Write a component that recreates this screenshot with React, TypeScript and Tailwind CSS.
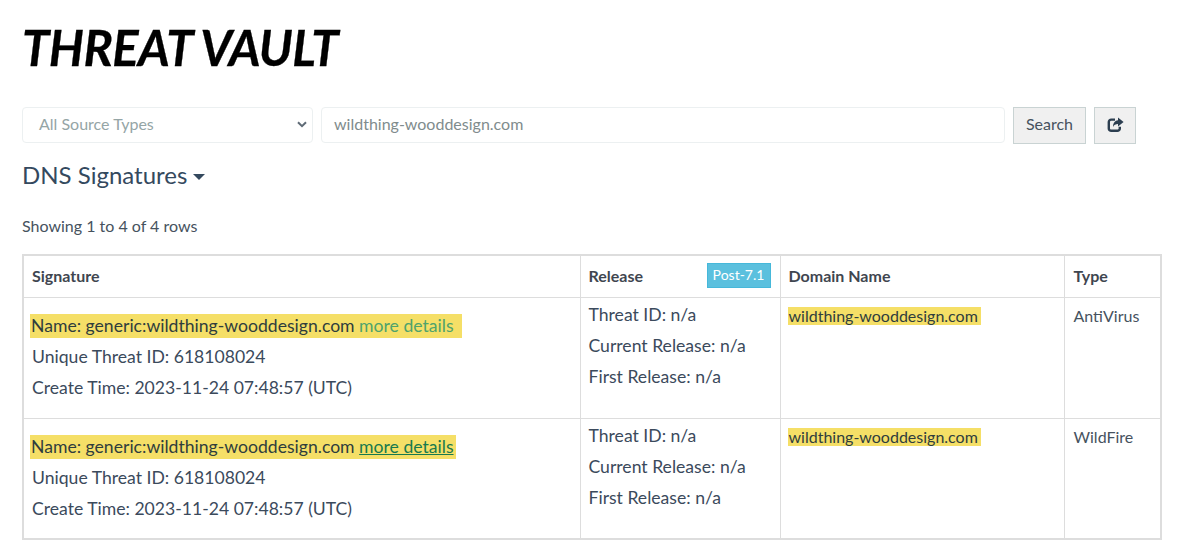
import React from 'react';

const rows = [
  { type: 'AntiVirus', linkClass: 'text-[#4fa36c]', pad: 'pr-[8px]' },
  { type: 'WildFire', linkClass: 'text-[#18794e] underline', pad: 'pr-[2px]' },
];

function Line({ children }: { children: React.ReactNode }) {
  return <div className="h-[31px] leading-[31px] whitespace-nowrap">{children}</div>;
}

export default function App() {
  return (
    <div className="h-[540px] overflow-hidden bg-white pl-[22px] pr-[19px] font-['Lato','Noto_Sans',sans-serif] text-[#3b4a5c]">
      <h1 className="pt-[17px] h-[103px] text-[49px] leading-[60px] font-bold italic text-black tracking-[-0.5px] [-webkit-text-stroke:0.3px_black] whitespace-nowrap">THREAT VAULT</h1>

      {/* Search bar */}
      <div className="mt-[4px] flex items-start h-[37px]">
        <div className="w-[291px] h-[36px] rounded border border-[#ecf0f1] flex items-center justify-between pl-[16px] pr-[5px] pb-[2px] text-[16px] text-[#95a5a6]">
          <span>All Source Types</span>
          <svg width="10" height="7" viewBox="0 0 10 7" className="text-[#5f6b76]">
            <path d="M1 1.2 L5 5.2 L9 1.2" fill="none" stroke="currentColor" strokeWidth="2" />
          </svg>
        </div>
        <div className="ml-[8px] w-[684px] h-[36px] rounded border border-[#ecf0f1] flex items-center pl-[12px] pb-[2px] text-[16px] text-[#7f8c8d]">
          wildthing-wooddesign.com
        </div>
        <button className="ml-[8px] w-[73px] h-[37px] border border-[#c9d3d3] bg-[#f0f0f0] pb-[3px] text-[16px] text-[#46525e]">Search</button>
        <button className="ml-[8px] w-[42px] h-[37px] border border-[#c9d3d3] bg-[#f0f0f0] flex items-center justify-center text-[#2c3e50]">
          <svg width="17" height="16" viewBox="0 0 17 16" className="-mt-[2px]">
            <path d="M8 2.6 H4.2 A2.4 2.4 0 0 0 1.8 5 V11.4 A2.4 2.4 0 0 0 4.2 13.8 H10.4 A2.4 2.4 0 0 0 12.8 11.4 V9.8" fill="none" stroke="currentColor" strokeWidth="2.4" />
            <path d="M11 0.6 L16.6 5 L11 9.4 V7 C8.6 7 7 7.8 6 10 C6 6 8 3.4 11 3.2 Z" fill="currentColor" />
          </svg>
        </button>
      </div>

      <div className="mt-[14px] h-[33px] flex items-center text-[24px] leading-[33px] text-[#34495e]">
        DNS Signatures
        <span className="ml-[6px] mt-[5px] w-0 h-0 border-x-[6px] border-x-transparent border-t-[6px] border-t-[#34495e]" />
      </div>

      <div className="mt-[23px] h-[24px] text-[16px] leading-[24px] text-[#46525e]">Showing 1 to 4 of 4 rows</div>

      {/* Signature table */}
      <table className="mt-[16px] w-[1140px] table-fixed border-collapse border-2 border-[#dddddd] text-[#3b4a5c]">
        <colgroup>
          <col className="w-[557px]" />
          <col className="w-[200px]" />
          <col className="w-[284px]" />
          <col />
        </colgroup>
        <thead>
          <tr className="h-[42px] text-[16px] font-bold text-[#3f4650]">
            <th className="border border-[#dddddd] pl-[8px] text-left font-bold">Signature</th>
            <th className="border border-[#dddddd] pl-[8px] pr-[9px] text-left font-bold">
              <div className="flex items-center justify-between h-[25px] -mt-[1px]">
                <span>Release</span>
                <span className="w-[64px] h-[25px] bg-[#5bc0de] border border-[#46b8da] text-[14px] leading-[22px] font-normal text-white text-center">Post-7.1</span>
              </div>
            </th>
            <th className="border border-[#dddddd] pl-[8px] text-left font-bold">Domain Name</th>
            <th className="border border-[#dddddd] pl-[9px] text-left font-bold">Type</th>
          </tr>
        </thead>
        <tbody>
          {rows.map((row) => (
            <tr key={row.type} className="h-[121px] align-top text-[17.6px]">
              <td className="border border-[#dddddd] pl-[8px] pt-[12px]">
                <Line>
                  <span className={`inline-block h-[24px] leading-[24px] bg-[#f5df67] text-[#2f3d3d] -ml-[2px] pl-[1px] ${row.pad}`}>
                    Name: generic:wildthing-wooddesign.com <a className={row.linkClass}>more details</a>
                  </span>
                </Line>
                <Line>Unique Threat ID: 618108024</Line>
                <Line>Create Time: 2023-11-24 07:48:57 (UTC)</Line>
              </td>
              <td className="border border-[#dddddd] pl-[8px] pt-[1px]">
                <Line>Threat ID: n/a</Line>
                <Line>Current Release: n/a</Line>
                <Line>First Release: n/a</Line>
              </td>
              <td className="border border-[#dddddd] pl-[7px] pt-[6px] text-[16px] leading-[24px]">
                <span className="inline-block h-[18px] leading-[18px] bg-[#f5df67] text-[#2f3d3d] pl-[1px] pr-[3px]">wildthing-wooddesign.com</span>
              </td>
              <td className="border border-[#dddddd] pl-[9px] pt-[6px] text-[16px] leading-[24px] text-[#46525e]">{row.type}</td>
            </tr>
          ))}
        </tbody>
      </table>
    </div>
  );
}
